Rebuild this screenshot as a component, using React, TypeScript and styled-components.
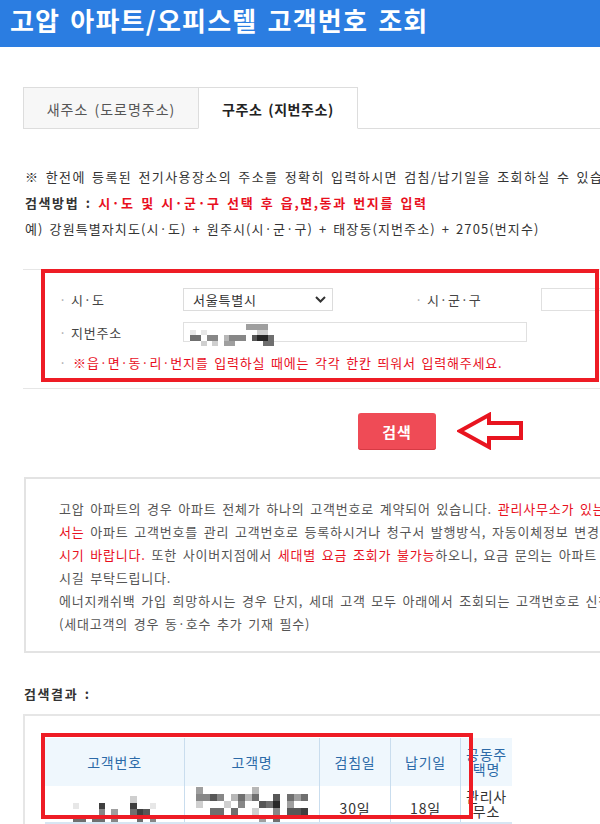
import React from 'react';
import styled, { createGlobalStyle } from 'styled-components';

// page basics
const GlobalStyle = createGlobalStyle`
  html, body {
    margin: 0;
    padding: 0;
    background: #fff;
    overflow: hidden;
  }
  body {
    width: 600px;
    font-family: "Noto Sans CJK KR", "Noto Sans", sans-serif;
    color: #333;
    font-size: 13px;
    letter-spacing: 0.8px;
    word-spacing: 2px;
  }
`;

// Top bar
const TitleBar = styled.header`
  height: 47px;
  background: #2b7de1;
  padding: 0 10px;
  box-sizing: border-box;
`;

const Title = styled.h1`
  margin: 0;
  font-size: 26px;
  line-height: 39px;
  font-weight: 700;
  color: #fff;
  letter-spacing: 1.2px;
  word-spacing: 3px;
  white-space: nowrap;
`;

const Content = styled.main`
  width: 780px;
  padding: 40px 0 30px 23px;
`;

// Tabs
const TabBar = styled.div`
  display: flex;
  border-bottom: 1px solid #ddd;
`;

const Tab = styled.div<{ $active?: boolean; $w: number }>`
  width: ${({ $w }) => $w}px;
  height: 42px;
  box-sizing: border-box;
  border: 1px solid #ddd;
  border-bottom-color: ${({ $active }) => ($active ? '#fff' : '#ddd')};
  margin-bottom: -1px;
  margin-left: ${({ $active }) => ($active ? '-1px' : '0')};
  background: ${({ $active }) => ($active ? '#fff' : '#f7f7f7')};
  color: ${({ $active }) => ($active ? '#222' : '#555')};
  font-size: 14px;
  font-weight: ${({ $active }) => ($active ? 700 : 400)};
  letter-spacing: ${({ $active }) => ($active ? '0.6px' : '1px')};
  display: flex;
  align-items: center;
  justify-content: center;
  padding-top: 2px;
  white-space: nowrap;
`;

// Intro lines
const Intro = styled.div`
  padding: 35px 0 0 2px;
  line-height: 26px;
`;

const Line = styled.div<{ $bold?: boolean; $ls?: number }>`
  white-space: nowrap;
  font-weight: ${({ $bold }) => ($bold ? 700 : 400)};
  letter-spacing: ${({ $bold, $ls }) => ($ls ? `${$ls}px` : $bold ? '1.6px' : 'inherit')};
`;

const Red = styled.span`
  color: #e8101e;
`;

// Search form
const FormSection = styled.section`
  position: relative;
  width: 577px;
  margin-top: 27px;
  border-top: 1px solid #e6e6e6;
  border-bottom: 1px solid #e6e6e6;
  padding: 18px 0 16px 36px;
  display: flex;
  flex-direction: column;
  gap: 11px;
`;

const FieldRow = styled.div`
  display: flex;
  align-items: center;
  height: 22px;
`;

const Label = styled.div<{ $w: number }>`
  width: ${({ $w }) => $w}px;
  flex: none;
  white-space: nowrap;
  color: #444;
  &::before {
    content: '·';
    color: #aaa;
    margin-right: 4px;
  }
`;

const SelectBox = styled.div`
  width: 150px;
  height: 23px;
  box-sizing: border-box;
  border: 1px solid #dcdcdc;
  display: flex;
  align-items: center;
  justify-content: space-between;
  padding: 0 6px 0 9px;
  color: #333;
  flex: none;
`;

const Spacer = styled.div<{ $w: number }>`
  width: ${({ $w }) => $w}px;
  flex: none;
`;

const TextInput = styled.div<{ $w: number; $h: number }>`
  position: relative;
  width: ${({ $w }) => $w}px;
  height: ${({ $h }) => $h}px;
  box-sizing: border-box;
  border: 1px solid #e0e0e0;
  flex: none;
`;

const Note = styled.div`
  white-space: nowrap;
  color: #e8101e;
  line-height: 18px;
  &::before {
    content: '·';
    color: #aaa;
    margin-right: 6px;
  }
`;

const Highlight = styled.div<{ $l: number; $t: number; $w: number; $h: number }>`
  position: absolute;
  left: ${({ $l }) => $l}px;
  top: ${({ $t }) => $t}px;
  width: ${({ $w }) => $w}px;
  height: ${({ $h }) => $h}px;
  box-sizing: border-box;
  border: 4px solid #ee1c25;
  pointer-events: none;
`;

const BlurPatch = styled.div`
  position: absolute;
  left: 6px;
  top: 1px;
`;

// Button row
const ButtonRow = styled.div`
  display: flex;
  align-items: center;
  gap: 21px;
  padding-left: 335px;
  margin-top: 23px;
`;

const SearchButton = styled.button`
  width: 78px;
  height: 37px;
  border: none;
  border-radius: 3px;
  background: #ef4b56;
  box-shadow: inset 0 -1px 0 #d63a44;
  color: #fff;
  font-family: inherit;
  font-size: 15px;
  font-weight: 700;
  letter-spacing: 1px;
  padding: 0;
`;

// Notice box
const NoticeBox = styled.div`
  width: 590px;
  margin: 27px 0 0 1px;
  border: 2px solid #e3e3e3;
  padding: 18px 0 16px 33px;
  line-height: 23px;
  color: #555;
`;

// Results
const ResultTitle = styled.div`
  margin: 31px 0 0 1px;
  line-height: 20px;
  font-weight: 700;
  letter-spacing: 1.6px;
  color: #333;
`;

const ResultBox = styled.div`
  position: relative;
  margin: 10px 0 0 0;
  border-top: 2px solid #e6e6e6;
  border-left: 2px solid #e6e6e6;
  padding: 22px 0 0 20px;
  height: 120px;
`;

const Table = styled.table`
  border-collapse: collapse;
  table-layout: fixed;
  width: 463px;
`;

const HeadCell = styled.th<{ $w: number }>`
  width: ${({ $w }) => $w}px;
  height: 48px;
  padding: 0;
  background: #eff7fd;
  color: #2c6aa8;
  font-weight: 400;
  font-size: 14px;
  line-height: 15px;
  border-left: 1px solid #c9ddee;
  &:first-child {
    border-left: none;
  }
`;

const BodyCell = styled.td<{ $narrow?: boolean }>`
  height: 33px;
  padding: ${({ $narrow }) => ($narrow ? '3px 0 0' : '0')};
  text-align: center;
  vertical-align: ${({ $narrow }) => ($narrow ? 'top' : 'bottom')};
  font-size: 14px;
  line-height: ${({ $narrow }) => ($narrow ? '15px' : '28px')};
  color: #333;
  border-left: 1px solid #c9ddee;
  border-bottom: 2px solid #d7e6f3;
  overflow: visible;
  white-space: nowrap;
  &:first-child {
    border-left: none;
  }
`;

const CellMosaic = styled.div`
  display: flex;
  justify-content: center;
`;

// pixelated blur squares
const MosaicGrid = styled.div<{ $cols: number; $cell: number }>`
  display: grid;
  grid-template-columns: repeat(${({ $cols }) => $cols}, ${({ $cell }) => $cell}px);
  grid-auto-rows: ${({ $cell }) => $cell}px;
  background: #fff;
`;

const Px = styled.span<{ $shade: number }>`
  background: ${({ $shade }) => `rgb(${255 - $shade * 24}, ${255 - $shade * 24}, ${255 - $shade * 24})`};
`;

const Mosaic: React.FC<{ rows: string[]; cell: number }> = ({ rows, cell }) => (
  <MosaicGrid $cols={rows[0].length} $cell={cell}>
    {rows.join('').split('').map((c, i) => (
      <Px key={i} $shade={c === '.' ? 0 : Number(c)} />
    ))}
  </MosaicGrid>
);

const jibunPx = [
  '..........4444.',
  '1.1.........22.',
  '66.55.3555.7996',
  '..2.2.44.....66',
];

const custNoPx = [
  '.........2...',
  '1...8....8..1',
  '....5.4..687.',
  '66.66.5...6.5',
];

const custNamePx = [
  '4.......3.......',
  '5575.3636..7.646',
  '2...2.5..769.4..',
  '..66.6..2..5.778',
  '.........4.6....',
];

const ChevronIcon = () => (
  <svg width="11" height="7" viewBox="0 0 11 7">
    <path d="M1 1 L5.5 5.5 L10 1" fill="none" stroke="#333" strokeWidth="2" />
  </svg>
);

const ArrowIcon = () => (
  <svg width="68" height="38" viewBox="0 0 68 38">
    <path
      d="M3 19 L32 3 L32 11 L64 11 L64 26 L32 26 L32 35 Z"
      fill="none"
      stroke="#e8141f"
      strokeWidth="4"
      strokeLinejoin="miter"
    />
  </svg>
);

const App: React.FC = () => {
  return (
    <>
      <GlobalStyle />
      <TitleBar>
        <Title>고압 아파트/오피스텔 고객번호 조회</Title>
      </TitleBar>
      <Content>
        <TabBar>
          <Tab $w={176}>새주소 (도로명주소)</Tab>
          <Tab $w={160} $active>구주소 (지번주소)</Tab>
        </TabBar>

        <Intro>
          <Line $ls={1.4}>※ 한전에 등록된 전기사용장소의 주소를 정확히 입력하시면 검침/납기일을 조회하실 수 있습니다.</Line>
          <Line $bold>
            검색방법 : <Red>시·도 및 시·군·구 선택 후 읍,면,동과 번지를 입력</Red>
          </Line>
          <Line $ls={1.1}>예) 강원특별자치도(시·도) + 원주시(시·군·구) + 태장동(지번주소) + 2705(번지수)</Line>
        </Intro>

        <FormSection>
          <FieldRow>
            <Label $w={124}>시·도</Label>
            <SelectBox>
              서울특별시
              <ChevronIcon />
            </SelectBox>
            <Spacer $w={82} />
            <Label $w={126}>시·군·구</Label>
            <TextInput $w={150} $h={23} />
          </FieldRow>
          <FieldRow>
            <Label $w={124}>지번주소</Label>
            <TextInput $w={344} $h={20}>
              <BlurPatch>
                <Mosaic rows={jibunPx} cell={5.6} />
              </BlurPatch>
            </TextInput>
          </FieldRow>
          <Note>※읍·면·동·리·번지를 입력하실 때에는 각각 한칸 띄워서 입력해주세요.</Note>
          <Highlight $l={18} $t={-1} $w={558} $h={113} />
        </FormSection>

        <ButtonRow>
          <SearchButton>검색</SearchButton>
          <ArrowIcon />
        </ButtonRow>

        <NoticeBox>
          <Line>
            고압 아파트의 경우 아파트 전체가 하나의 고객번호로 계약되어 있습니다. <Red>관리사무소가 있는 경우 관리사무소에</Red>
          </Line>
          <Line>
            <Red>서는</Red> 아파트 고객번호를 관리 고객번호로 등록하시거나 청구서 발행방식, 자동이체정보 변경 등을 신청하
          </Line>
          <Line>
            <Red>시기 바랍니다.</Red> 또한 사이버지점에서 <Red>세대별 요금 조회가 불가능</Red>하오니, 요금 문의는 아파트 관리사무소로 문의하
          </Line>
          <Line>시길 부탁드립니다.</Line>
          <Line>에너지캐쉬백 가입 희망하시는 경우 단지, 세대 고객 모두 아래에서 조회되는 고객번호로 신청하시기 바랍니다.</Line>
          <Line>(세대고객의 경우 동·호수 추가 기재 필수)</Line>
        </NoticeBox>

        <ResultTitle>검색결과 :</ResultTitle>
        <ResultBox>
          <Table>
            <thead>
              <tr>
                <HeadCell $w={139}>고객번호</HeadCell>
                <HeadCell $w={134}>고객명</HeadCell>
                <HeadCell $w={70}>검침일</HeadCell>
                <HeadCell $w={69}>납기일</HeadCell>
                <HeadCell $w={51}>
                  공동주
                  <br />
                  택명
                </HeadCell>
              </tr>
            </thead>
            <tbody>
              <tr>
                <BodyCell>
                  <CellMosaic>
                    <Mosaic rows={custNoPx} cell={6.4} />
                  </CellMosaic>
                </BodyCell>
                <BodyCell>
                  <CellMosaic>
                    <Mosaic rows={custNamePx} cell={7} />
                  </CellMosaic>
                </BodyCell>
                <BodyCell>30일</BodyCell>
                <BodyCell>18일</BodyCell>
                <BodyCell $narrow>
                  관리사
                  <br />
                  무소
                </BodyCell>
              </tr>
            </tbody>
          </Table>
          <Highlight $l={16} $t={17} $w={432} $h={86} />
        </ResultBox>
      </Content>
    </>
  );
};

export default App;
